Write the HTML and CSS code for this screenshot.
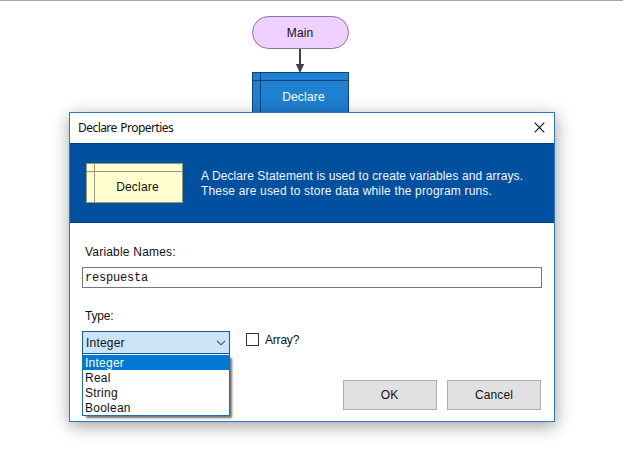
FILE: index.html
```html
<!DOCTYPE html>
<html lang="en">
<head>
<meta charset="utf-8">
<title>Declare Properties</title>
<link rel="stylesheet" href="styles.css">
</head>
<body>
<main class="flowchart">
  <div class="terminal">Main</div>
  <svg class="arrow" width="10" height="23" viewBox="0 0 10 23"><path d="M5 0V16" stroke="#404040" stroke-width="2"/><path d="M.8 15H9.2L5.5 23H4.5Z" fill="#404040"/></svg>
  <div class="declare declare-active"><span>Declare</span></div>
</main>
<section class="dialog">
  <header class="titlebar">
    <span class="title">Declare Properties</span>
    <svg class="close" width="11" height="11" viewBox="0 0 11 11"><path d="M.7 .7L10.3 10.3M10.3 .7L.7 10.3" stroke="#111" stroke-width="1.15"/></svg>
  </header>
  <div class="banner">
    <div class="declare declare-sample"><span>Declare</span></div>
    <p class="info"><span class="line-one">A Declare Statement is used to create variables and arrays.</span><br><span class="line-two">These are used to store data while the program runs.</span></p>
  </div>
  <div class="form">
    <label class="names-label">Variable Names:</label>
    <div class="field">respuesta</div>
    <label class="type-label">Type:</label>
    <div class="row">
      <div class="combo">
        <span>Integer</span>
        <svg width="10" height="6" viewBox="0 0 10 6"><path d="M1 .8L5 4.8L9 .8" fill="none" stroke="#444" stroke-width="1.1"/></svg>
        <ul class="options">
          <li class="selected">Integer</li>
          <li>Real</li>
          <li>String</li>
          <li>Boolean</li>
        </ul>
      </div>
      <div class="check"><i class="box"></i><span>Array?</span></div>
    </div>
    <div class="buttons">
      <div class="button ok">OK</div>
      <div class="button">Cancel</div>
    </div>
  </div>
</section>
</body>
</html>
```
FILE: styles.css
```css
* { box-sizing: border-box; }
body {
  margin: 0;
  width: 623px;
  height: 475px;
  overflow: hidden;
  position: relative;
  background: #fff;
  border-top: 1px solid #a3a3a3;
  color: #111;
  font: 12px/15px "Liberation Sans", Arial, sans-serif;
}
.flowchart {
  width: 97px;
  margin-left: 252px;
  padding-top: 15px;
  display: flex;
  flex-direction: column;
  align-items: center;
}
.terminal {
  width: 97px;
  height: 33px;
  border: 1px solid #8b749b;
  border-radius: 17px;
  background: #efd0ff;
  text-align: center;
  line-height: 32px;
  padding-right: 1px;
  letter-spacing: .1px;
}
.arrow { display: block; margin-right: 1px; }
.declare {
  width: 97px;
  height: 41px;
  border: 1px solid;
  display: grid;
  grid-template: 8px 1fr / 8px 1fr;
}
.declare::before { content: ""; grid-area: 1 / 1 / 3 / 2; border-right: 1px solid; }
.declare::after { content: ""; grid-area: 1 / 1 / 2 / 3; border-bottom: 1px solid; }
.declare span {
  grid-area: 2 / 2;
  align-self: center;
  text-align: center;
  padding-right: 2px;
  letter-spacing: .2px;
}
.declare-active { background: #1f7fd1; border-color: #0b4478; color: #0b4478; }
.declare-active span { color: #fff; padding-top: 2px; }
.declare-sample { background: #ffffcf; color: #97977b; border-color: #97977b; height: 40px; }
.declare-sample span { color: #111; padding-top: 1px; }
.dialog {
  position: absolute;
  left: 69px;
  top: 111px;
  width: 486px;
  height: 310px;
  border: 1px solid #2f79b5;
  background: #fff;
  box-shadow: 1px 4px 16px rgba(0, 0, 0, .38);
}
.titlebar {
  height: 30px;
  display: flex;
  align-items: center;
  justify-content: space-between;
  padding: 0 9px 1px 8px;
}
.title { font: 12px/15px "Noto Sans", sans-serif; letter-spacing: -.55px; word-spacing: 1px; }
.banner {
  height: 80px;
  padding: 19px 0 0 16px;
  display: flex;
  background: #0050a0;
  border-top: 1px solid #023b77;
  border-bottom: 1px solid #023b77;
}
.info { margin: 6px 0 0 18px; color: #f4f8ff; white-space: nowrap; }
.line-one { letter-spacing: .1px; }
.line-two { letter-spacing: .17px; }
.form { padding: 22px 12px 0; display: flex; flex-direction: column; }
.names-label, .type-label { margin-left: 3px; }
.names-label { letter-spacing: .2px; }
.field {
  height: 21px;
  margin-top: 7px;
  border: 1px solid #767676;
  padding-left: 2px;
  font: 12px/21px "Liberation Mono", "Courier New", monospace;
  letter-spacing: -.2px;
}
.type-label { margin-top: 21px; letter-spacing: -.2px; }
.row { display: flex; margin-top: 7px; }
.combo {
  position: relative;
  width: 148px;
  height: 23px;
  border: 1px solid #155b91;
  background: #cce4f7;
  display: flex;
  justify-content: space-between;
  align-items: center;
  padding: 1px 3px 0;
  letter-spacing: .2px;
}
.options {
  position: absolute;
  left: -1px;
  top: 22px;
  width: 148px;
  height: 62px;
  margin: 0;
  padding: 1px 0 0;
  list-style: none;
  border: 1px solid #1d70ac;
  border-top: 0;
  background: #fff;
  box-shadow: 3px 3px 2px -1px rgba(0, 0, 0, .55);
}
.options li { height: 15px; line-height: 16px; padding-left: 2px; letter-spacing: .25px; }
.options .selected { background: #0078d7; color: #fff; }
.check { display: flex; align-items: center; height: 17px; margin-left: 16px; gap: 6px; letter-spacing: -.2px; }
.check span { padding-top: 1px; }
.box { width: 13px; height: 13px; border: 1px solid #333; background: #fff; }
.buttons { display: flex; justify-content: flex-end; gap: 10px; margin: 26px 1px 0 0; }
.button {
  width: 94px;
  height: 30px;
  border: 1px solid #adadad;
  background: #e1e1e1;
  text-align: center;
  line-height: 28px;
  letter-spacing: .1px;
}
.ok { padding-right: 1px; }
```
